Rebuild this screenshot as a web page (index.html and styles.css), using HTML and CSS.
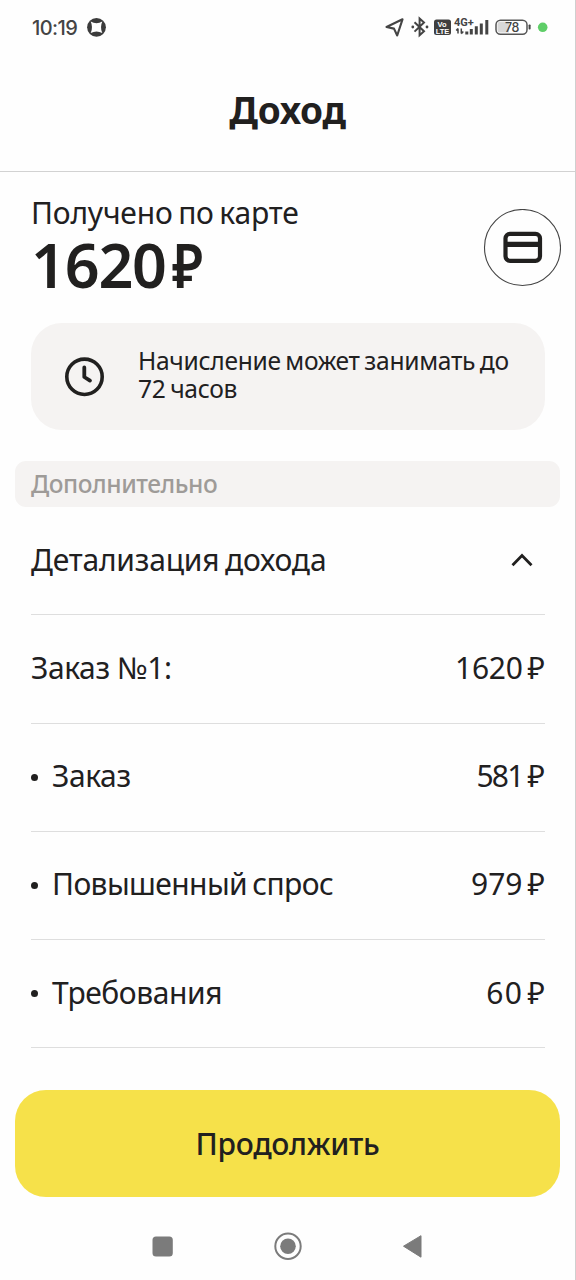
FILE: index.html
```html
<!DOCTYPE html>
<html lang="ru">
<head>
<meta charset="utf-8">
<title>Доход</title>
<link rel="stylesheet" href="styles.css">
</head>
<body>
<div class="screen">
  <div class="status">
    <span class="clock">10:19</span>
    <svg class="app-icon" width="20" height="20" viewBox="0 0 20 20"><circle cx="10.500" cy="10.300" r="9.4" fill="#3b3b3b"/><path d="M4.700 4.500Q10.500 7.900 16.300 4.500Q13.700 10.300 16.300 16.100Q10.500 12.900 4.700 16.100Q7.300 10.300 4.700 4.500Z" fill="#fff"/></svg>
    <svg class="tray" width="176" height="26" viewBox="0 0 176 26">
      <path d="M1.5 13L17.5 5.3L12.2 21.5L9 14.6Z" fill="none" stroke="#444" stroke-width="2.1" stroke-linejoin="round"/>
      <path d="M29.5 8.2L39 17.2L34.6 21.2V4.4L39 8.4L29.5 17.6" fill="none" stroke="#444" stroke-width="2"/>
      <circle cx="27.8" cy="13" r="1.4" fill="#444"/><circle cx="42" cy="13" r="1.4" fill="#444"/>
      <rect x="49" y="5.5" width="17" height="15.5" rx="2.5" fill="#3f3f3f"/>
      <text x="57" y="12.6" class="volte">Vo</text><text x="57.5" y="19.8" class="volte">LTE</text>
      <text x="69" y="12.3" class="net">4G+</text>
      <path d="M73 14.5V19.5M71.2 16.5L73 14.5M76.3 14.5V19.5M76.3 19.7L78.3 17.5" stroke="#444" stroke-width="1.5" fill="none"/>
      <path d="M81.8 17.5V20.6M86.3 15V20.6M91.3 12.2V20.6M96.3 9.4V20.6M101.8 6V20.6" stroke="#444" stroke-width="3"/>
      <rect x="111" y="6.2" width="31" height="14" rx="4.5" fill="#fff" stroke="#555" stroke-width="1.5"/>
      <path d="M115 7.8H124V18.6H115Q112.5 18.6 112.5 16V10.5Q112.5 7.8 115 7.8Z" fill="#d8d8d8"/>
      <rect x="143.6" y="10.5" width="2" height="5" rx=".8" fill="#444"/>
      <text x="127" y="17.6" class="charge">78</text>
      <circle cx="157.7" cy="13.3" r="4.8" fill="#5fce68"/>
    </svg>
  </div>

  <header class="header"><h1 class="title">Доход</h1></header>

  <main class="content">
    <section class="summary">
      <div class="received">
        <div class="received-label">Получено по карте</div>
        <div class="received-sum">1620<span class="received-ruble">₽</span></div>
      </div>
      <svg class="card-button" width="78" height="78" viewBox="0 0 78 78"><circle cx="39.500" cy="38.500" r="38" fill="none" stroke="#444" stroke-width="1.100"/><rect x="22.500" y="24.800" width="34.500" height="27" rx="4.5" fill="none" stroke="#21201f" stroke-width="4.2"/><path d="M22 35.300H57" stroke="#21201f" stroke-width="5.2"/></svg>
    </section>

    <section class="notice">
      <svg class="notice-icon" width="40" height="40" viewBox="0 0 40 40"><circle cx="20.5" cy="19.8" r="17.7" fill="none" stroke="#21201f" stroke-width="3.6"/><path d="M20.3 10.5V20L26 23.6" fill="none" stroke="#21201f" stroke-width="3.8" stroke-linecap="round" stroke-linejoin="round"/></svg>
      <p class="notice-text">Начисление может занимать до 72 часов</p>
    </section>

    <h2 class="extra">Дополнительно</h2>

    <div class="rows">
      <div class="row"><span class="details">Детализация дохода</span>
        <svg class="chevron" width="22" height="16" viewBox="0 0 22 16"><path d="M1.5 14.200L11 4.600L20.5 14.200" fill="none" stroke="#21201f" stroke-width="2.8"/></svg></div>
      <div class="row"><span class="order">Заказ №1:</span><span class="sum sum-total">1620<span class="ruble">₽</span></span></div>
      <div class="row"><span class="item">Заказ</span><span class="sum sum-base">581<span class="ruble">₽</span></span></div>
      <div class="row"><span class="item item-demand">Повышенный спрос</span><span class="sum">979<span class="ruble">₽</span></span></div>
      <div class="row"><span class="item">Требования</span><span class="sum sum-needs">60<span class="ruble">₽</span></span></div>
    </div>
  </main>

  <button class="continue">Продолжить</button>

  <nav class="navbar">
    <svg width="28" height="28" viewBox="0 0 28 28"><rect x="3.5" y="4.5" width="20.3" height="20" rx="3.5" fill="#7b7b7b"/></svg>
    <svg width="28" height="28" viewBox="0 0 28 28"><circle cx="14" cy="14.3" r="12.7" fill="none" stroke="#7b7b7b" stroke-width="2"/><circle cx="14" cy="14.3" r="7.8" fill="#7b7b7b"/></svg>
    <svg width="28" height="28" viewBox="0 0 28 28"><path d="M4.5 14.200L22 3.700V25.200Z" fill="#7b7b7b" stroke="#7b7b7b" stroke-linejoin="round"/></svg>
  </nav>
</div>
</body>
</html>
```
FILE: styles.css
```css
* { box-sizing: border-box; }
body {
  margin: 0;
  background: #fefefe;
  color: #21201f;
  font-family: "Noto Sans", "Open Sans", sans-serif;
}
.screen {
  width: 576px;
  height: 1280px;
  display: flex;
  flex-direction: column;
  border-right: 1px solid #cfcfcf;
  overflow: hidden;
  white-space: nowrap;
}
.status {
  height: 54px;
  flex: none;
  display: flex;
  align-items: center;
  padding: 0 14px 0 32px;
}
.clock { width: 54px; padding-top: 1px; font: 500 20px/28px Inter, sans-serif; color: #444; letter-spacing: -0.6px; }
.tray { margin-left: auto; }
.volte { font: 700 7.5px "Liberation Sans", sans-serif; fill: #fff; text-anchor: middle; }
.net { font: 700 11px Roboto, sans-serif; fill: #444; }
.charge { font: 500 12.5px Inter, sans-serif; fill: #444; text-anchor: middle; letter-spacing: -0.3px; }
.header {
  height: 118px;
  flex: none;
  border-bottom: 1px solid #d2d2d2;
  padding-top: 29px;
  text-align: center;
}
.title { margin: 0; font-size: 37px; line-height: 54px; font-weight: 700; letter-spacing: -0.2px; }
.content { padding: 0 15px; }
.summary { height: 151px; display: flex; justify-content: space-between; padding: 20px 0 0 16px; }
.received { padding-top: 1px; }
.received-label { font-size: 30px; line-height: 40px; letter-spacing: -0.2px; word-spacing: -2px; }
.received-sum { font-size: 61px; line-height: 64px; font-weight: 600; letter-spacing: -1.2px; }
.received-ruble { display: inline-block; margin-left: 6px; transform: scaleX(0.86); transform-origin: left; }
.card-button { flex: none; margin: 17px -1px 0 0; }
.notice {
  height: 107px;
  margin: 0 15px 0 16px;
  padding-left: 33px;
  border-radius: 31px;
  background: #f5f3f2;
  display: flex;
  align-items: center;
  gap: 34px;
}
.notice-text {
  width: 380px;
  margin: 0 0 3px;
  font-size: 24.6px;
  line-height: 28px;
  letter-spacing: -0.3px;
  word-spacing: -1.5px;
  white-space: normal;
}
.extra {
  height: 46px;
  margin: 31px 0 0;
  padding-left: 16px;
  border-radius: 11px;
  background: #f5f3f2;
  color: #9e9b98;
  font-size: 24.5px;
  line-height: 46px;
  font-weight: 500;
  letter-spacing: -0.45px;
}
.rows { padding: 0 15px 0 16px; }
.row {
  height: 108.25px;
  padding-bottom: 3px;
  border-bottom: 1px solid #dedede;
  display: flex;
  align-items: center;
  justify-content: space-between;
  font-size: 30px;
}
.details { letter-spacing: -0.2px; word-spacing: -2px; }
.order { letter-spacing: -0.4px; }
.chevron { margin-right: 12px; }
.item { display: flex; align-items: center; gap: 14px; letter-spacing: -0.4px; }
.item::before { content: ""; width: 7px; height: 7px; margin-top: 3px; border-radius: 50%; background: #21201f; }
.item-demand { letter-spacing: -0.6px; word-spacing: -2px; }
.ruble { margin-left: 5px; letter-spacing: 0; }
.sum-total { letter-spacing: -0.3px; }
.sum-base { letter-spacing: -1.8px; }
.sum-base .ruble { margin-left: 5px; }
.sum-needs { letter-spacing: 1.5px; }
.sum-needs .ruble { margin-left: 4px; }
.continue {
  width: 545px;
  height: 107px;
  flex: none;
  margin: 42px 0 0 15px;
  padding: 0;
  border: 0;
  border-radius: 31px;
  background: #f6e14a;
  color: #21201f;
  font: 500 30px/107px "Noto Sans", sans-serif;
  letter-spacing: -0.3px;
}
.navbar { margin-top: 35px; display: flex; justify-content: center; gap: 97px; }
```
